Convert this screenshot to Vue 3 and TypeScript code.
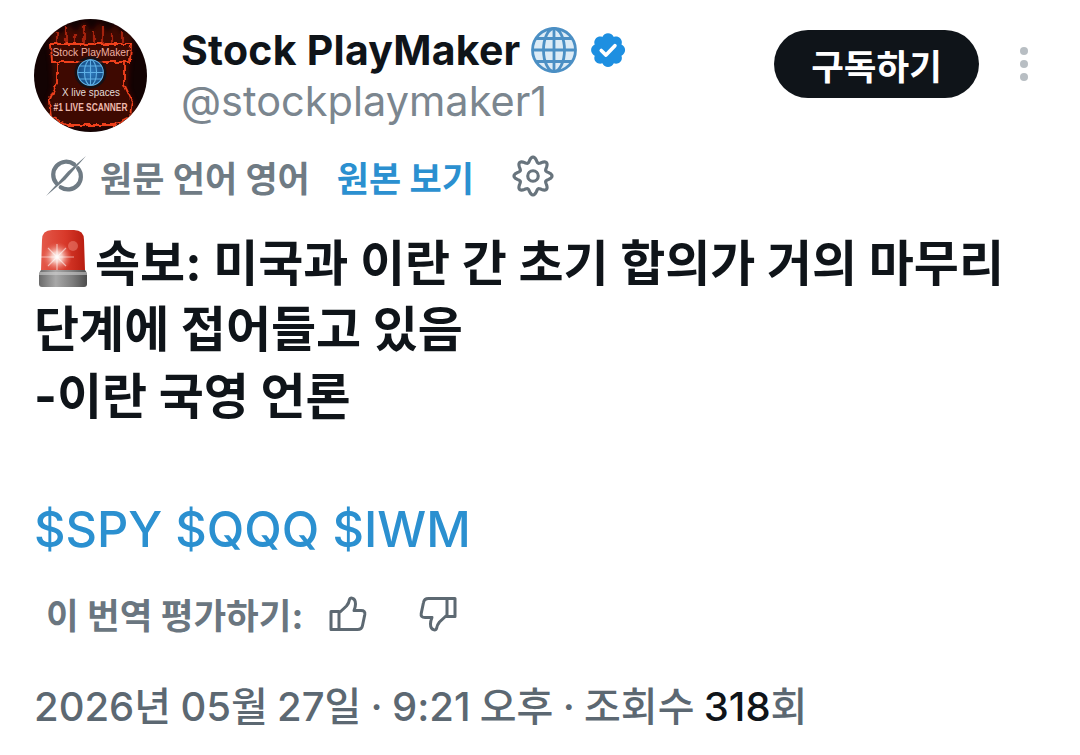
<template>
  <div class="page">
    <header class="head">
      <svg class="avatar" viewBox="0 0 113 113">
        <defs>
          <clipPath id="av"><circle cx="56.5" cy="56.5" r="56.5" /></clipPath>
          <filter id="fire" x="-20%" y="-20%" width="140%" height="140%">
            <feTurbulence type="fractalNoise" baseFrequency="0.16" numOctaves="2" seed="4" />
            <feDisplacementMap in="SourceGraphic" scale="5" xChannelSelector="R" yChannelSelector="G" />
            <feGaussianBlur stdDeviation="0.6" />
          </filter>
          <filter id="soft" x="-20%" y="-20%" width="140%" height="140%"><feGaussianBlur stdDeviation="2.6" /></filter>
          <radialGradient id="ball" cx=".5" cy=".5" r=".6">
            <stop offset="0" stop-color="#2f7cc0" /><stop offset="1" stop-color="#12457c" />
          </radialGradient>
        </defs>
        <g clip-path="url(#av)">
          <rect width="113" height="113" fill="#130303" />
          <path d="M15 26 L20 8 L27 16 L34 5 L42 13 L50 2 L57 12 L66 3 L73 13 L82 5 L88 15 L96 9 L99 26 L95 46 L94 70 L104 92 L84 108 H30 L10 92 L19 70 L18 46 Z" fill="#5a0d06" opacity=".62" filter="url(#soft)" />
          <path d="M23 25 V13 M32 25 V8 M41 25 V15 M50 25 V6 M60 25 V12 M69 25 V7 M78 25 V14 M88 25 V11" fill="none" stroke="#a32210" stroke-width="2.200" filter="url(#fire)" />
          <path d="M17 25 H97 L96 43 H18 Z M23 43 V65 L15 82 L17 98 L33 106 H80 L96 98 L98 82 L90 65 V43" fill="none" stroke="#ee3f1d" stroke-width="1.900" filter="url(#fire)" />
          <text x="57" y="36.500" class="av-a" textLength="77" lengthAdjust="spacingAndGlyphs">Stock PlayMaker</text>
          <circle cx="56.500" cy="53.500" r="16" fill="#06141f" opacity=".7" />
          <circle cx="56.500" cy="53.500" r="12.800" fill="url(#ball)" />
          <g fill="none" stroke="#5fb0e6" stroke-width="1.100">
            <circle cx="56.500" cy="53.500" r="12.800" />
            <ellipse cx="56.500" cy="53.500" rx="6" ry="12.800" />
            <path d="M56.500 40.700 V66.300 M43.700 53.500 H69.300 M45.500 47 H67.500 M45.500 60 H67.500" />
          </g>
          <text x="57" y="76.500" class="av-b" textLength="58" lengthAdjust="spacingAndGlyphs">X live spaces</text>
          <text x="56.500" y="91.500" class="av-c" textLength="74" lengthAdjust="spacingAndGlyphs">#1 LIVE SCANNER</text>
        </g>
      </svg>
      <div class="who">
        <div class="name-row">
          <span class="name">Stock PlayMaker</span>
          <svg class="globe" viewBox="0 0 48 48" fill="none" stroke="#4b8fc4" stroke-width="2.800">
            <circle cx="24" cy="24" r="21.500" fill="#dcebf6" />
            <ellipse cx="24" cy="24" rx="10.500" ry="21.500" />
            <path d="M24 2.500 V45.500 M2.500 24 H45.500 M6 12.500 H42 M6 35.500 H42" />
          </svg>
          <svg class="badge" viewBox="0 0 22 22">
            <path fill="#1d8fe1" d="M20.400 11c0-1.300-.8-2.500-2-3 .5-1.200.2-2.600-.7-3.500s-2.300-1.200-3.500-.7c-.5-1.200-1.800-2-3.200-2s-2.600.8-3.100 2c-1.200-.5-2.600-.2-3.500.7s-1.200 2.300-.7 3.500c-1.200.5-2 1.700-2 3s.8 2.600 2 3.100c-.5 1.200-.2 2.600.7 3.500s2.300 1.200 3.500.7c.5 1.200 1.800 2 3.100 2s2.700-.8 3.200-2c1.200.5 2.600.2 3.500-.7s1.200-2.300.7-3.500c1.200-.5 2-1.800 2-3.100z" />
            <path fill="none" stroke="#fff" stroke-width="2" stroke-linecap="round" stroke-linejoin="round" d="M7.300 11.300l2.600 2.500 4.900-5.200" />
          </svg>
        </div>
        <div class="handle">@stockplaymaker1</div>
      </div>
      <button class="sub">구독하기</button>
      <div class="more"><i></i><i></i><i></i></div>
    </header>

    <div class="trans">
      <svg class="no-globe" viewBox="0 0 44 44">
        <path d="M30 10.300A13 13 0 0 0 12.200 29M34 14.300A13 13 0 0 1 16.700 33.300" fill="none" stroke="#6f7b84" stroke-width="4.200" stroke-linecap="round" />
        <path d="M42 2 L24 17.500 L2 42 L21.500 25.500 Z" fill="#6f7b84" />
      </svg>
      <span class="lang">원문 언어 영어</span>
      <span class="orig">원본 보기</span>
      <svg class="gear" viewBox="0 0 40 40" fill="none" stroke="#68747d" stroke-width="3" stroke-linejoin="round">
        <path :d="gearPath" />
        <circle cx="20" cy="20" r="5" />
      </svg>
    </div>

    <div class="body">
      <p class="line"><svg class="siren" viewBox="0 0 52 58">
        <defs>
          <linearGradient id="base" x1="0" y1="0" x2="1" y2="0">
            <stop offset="0" stop-color="#6a6a6a" /><stop offset=".35" stop-color="#a8a8a8" /><stop offset=".7" stop-color="#7d7d7d" /><stop offset="1" stop-color="#4c4c4c" />
          </linearGradient>
          <linearGradient id="dome" x1="0" y1="0" x2="1" y2="0">
            <stop offset="0" stop-color="#e4594a" /><stop offset=".55" stop-color="#d8392a" /><stop offset="1" stop-color="#b81d10" />
          </linearGradient>
          <radialGradient id="flare" cx=".5" cy=".5" r=".5">
            <stop offset="0" stop-color="#fff" /><stop offset=".35" stop-color="#f7c5bc" /><stop offset="1" stop-color="#e8695a" stop-opacity="0" />
          </radialGradient>
        </defs>
        <path d="M5 11 Q5 1 15 1 H37 Q47 1 47 11 L48 41 H4 Z" fill="url(#dome)" />
        <circle cx="20" cy="28" r="15" fill="url(#flare)" />
        <circle cx="36" cy="17" r="5" fill="#f08a7c" opacity=".5" />
        <path d="M4 28 H37 M20 15 V41 M11 19 L29 37 M29 19 L11 37" stroke="#fff" stroke-width="1.200" opacity=".55" />
        <path d="M4 41 H48 L50 44 V55 Q50 58 47 58 H5 Q2 58 2 55 V44 Z" fill="url(#base)" />
        <rect x="2" y="43" width="48" height="3" fill="#d6d6d6" opacity=".55" />
      </svg>속보: 미국과 이란 간 초기 합의가 거의 마무리</p>
      <p class="line">단계에 접어들고 있음</p>
      <p class="line">-이란 국영 언론</p>
      <p class="line tags">$SPY $QQQ $IWM</p>
    </div>

    <div class="rate">
      <span>이 번역 평가하기:</span>
      <svg class="thumb" viewBox="0 0 38 36" fill="none" stroke="#5d6972" stroke-width="3" stroke-linejoin="round" stroke-linecap="round">
        <path :d="thumbPath" />
      </svg>
      <svg class="thumb down" viewBox="0 0 38 36" fill="none" stroke="#5d6972" stroke-width="3" stroke-linejoin="round" stroke-linecap="round">
        <path :d="thumbPath" />
      </svg>
    </div>

    <div class="meta">2026년 05월 27일 · 9:21 오후 · 조회수 <b>318</b>회</div>
  </div>
</template>

<script setup lang="ts">
// eight soft lobes round the settings gear
const gearPoints: string[] = [];
for (let i = 0; i < 120; i++) {
  const a = (i / 120) * Math.PI * 2;
  const r = 15.6 + 2.5 * Math.cos(a * 8);
  gearPoints.push(`${(20 + r * Math.sin(a)).toFixed(2)} ${(20 - r * Math.cos(a)).toFixed(2)}`);
}
const gearPath = `M${gearPoints.join('L')}Z`;

const thumbPath =
  'M2 15.5H10V33.5H2ZM10 17L17.5 10Q20 7 20.5 3.5Q20.8 1.8 23 2.2Q26.5 3 26.5 8Q26.5 11 25 14.5H32Q36.5 14.5 35.8 18.5L33.5 29.5Q32.8 33.5 28.5 33.5H10';
</script>

<style>
html, body { background: #fff; }
</style>

<style scoped>
.page {
  width: 1080px;
  height: 755px;
  overflow: hidden;
  box-sizing: border-box;
  padding: 19px 0 0 34px;
  background: #fff;
  font-family: Inter, "Noto Sans CJK KR", sans-serif;
  color: #0f1419;
}
.head {
  display: flex;
  align-items: flex-start;
}
.avatar {
  width: 113px;
  height: 113px;
  flex: none;
}
.av-a, .av-b, .av-c {
  font-family: "Liberation Sans", sans-serif;
  text-anchor: middle;
  fill: #eeb0a2;
}
.av-a { font-size: 10px; }
.av-b { font-size: 10px; fill: #e5dcd8; }
.av-c { font-size: 10px; font-weight: 700; fill: #eeb9ad; }
.who {
  margin-left: 34px;
  width: 593px;
}
.name-row {
  display: flex;
  align-items: center;
  height: 61px;
}
.name {
  font-size: 41px;
  font-weight: 700;
  letter-spacing: 0.25px;
}
.globe {
  width: 48px;
  height: 48px;
  margin-left: 9px;
}
.badge {
  width: 40px;
  height: 40px;
  margin-left: 10px;
}
.handle {
  font-size: 41.500px;
  line-height: 43px;
  color: #7b868f;
}
.sub {
  margin-top: 11px;
  width: 205px;
  height: 68px;
  border: 0;
  border-radius: 34px;
  background: #0f1419;
  color: #fff;
  font: 700 35.500px "Noto Sans CJK KR", sans-serif;
}
.more {
  margin: 28px 0 0 41px;
  display: flex;
  flex-direction: column;
  gap: 5px;
}
.more i {
  width: 8px;
  height: 8px;
  border-radius: 50%;
  background: #b8bec3;
}
.trans {
  display: flex;
  align-items: center;
  height: 44px;
  margin-top: 22px;
  padding-left: 10px;
  font-size: 35px;
  font-weight: 700;
}
.no-globe {
  width: 44px;
  height: 44px;
}
.lang {
  margin-left: 12px;
  color: #6f7b84;
}
.orig {
  margin-left: 27px;
  color: #2b90d0;
}
.gear {
  width: 42px;
  height: 42px;
  margin-left: 38px;
}
.body {
  margin-top: 28px;
}
.line {
  margin: 0;
  height: 66.500px;
  display: flex;
  align-items: center;
  font-size: 49px;
  font-weight: 700;
  white-space: pre;
}
.siren {
  width: 52px;
  height: 58px;
  margin: 0 6px 2px 3px;
  flex: none;
}
.tags {
  margin-top: 70.500px;
  color: #2b90d0;
  font-weight: 500;
  font-size: 48.800px;
}
.rate {
  display: flex;
  align-items: center;
  margin-top: 29px;
  padding-left: 12px;
  height: 44px;
  font-size: 35.500px;
  font-weight: 700;
  color: #6a7680;
}
.thumb {
  width: 38px;
  height: 36px;
  margin-left: 26px;
}
.down {
  transform: rotate(180deg);
  margin-left: 52px;
}
.meta {
  margin-top: 39px;
  font-size: 40px;
  font-weight: 500;
  word-spacing: -1.400px;
  color: #5c6872;
}
.meta b {
  font-weight: 500;
  color: #0f1419;
}
</style>
